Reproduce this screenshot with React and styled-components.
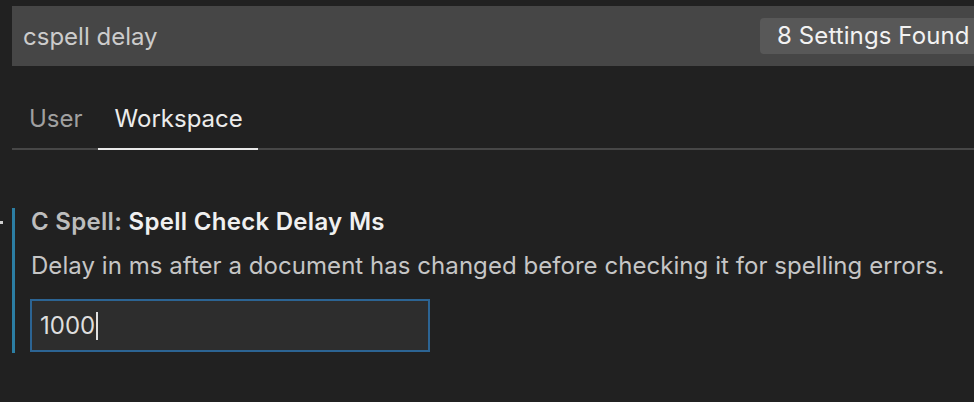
import React from 'react'
import styled, { createGlobalStyle } from 'styled-components'

const Global = createGlobalStyle`
  html, body {
    margin: 0;
    padding: 0;
    background: #212121;
    overflow: hidden;
  }
  body {
    font-family: Inter, "Noto Sans", "Liberation Sans", sans-serif;
  }
`

const Page = styled.div`
  width: 974px;
  height: 402px;
  background: #212121;
  padding: 6px 0 0 12px;
  box-sizing: border-box;
  position: relative;
  overflow: hidden;
`

const SearchBar = styled.div`
  width: 990px;
  height: 60px;
  box-sizing: border-box;
  background: #464646;
  display: flex;
  align-items: center;
  padding: 0 10px 0 11px;
  white-space: nowrap;
`

const Query = styled.span`
  font-size: 24px;
  color: #cccccc;
`

const Count = styled.span`
  margin-left: auto;
  background: #585858;
  color: #f2f2f2;
  font-size: 24px;
  border-radius: 4px;
  padding-left: 17px;
  box-sizing: border-box;
  height: 36px;
  line-height: 36px;
  width: 232px;
  letter-spacing: 0.1px;
`

const Tabs = styled.div`
  display: flex;
  margin-top: 39px;
  border-bottom: 2px solid #474747;
`

const Tab = styled.div`
  font-size: 24px;
  line-height: 28px;
  color: ${p => (p.$active ? '#ececec' : '#a0a0a0')};
  padding: 0 15px 15px 17px;
  margin-bottom: -2px;
  border-bottom: 2px solid ${p => (p.$active ? '#e8e8e8' : 'transparent')};
`

const Item = styled.div`
  margin-top: 58px;
  border-left: 3px solid #2c7ea3;
  padding-left: 16px;
  height: 145px;
  box-sizing: border-box;
`

const Dot = styled.div`
  position: absolute;
  left: 0;
  top: 221px;
  width: 3px;
  height: 3px;
  background: #cfcfcf;
`

const Title = styled.div`
  font-size: 24px;
  font-weight: 600;
  color: #f0f0f0;
  line-height: 28px;
  letter-spacing: 0.3px;
`

const Category = styled.span`
  color: #bdbdbd;
`

const Desc = styled.div`
  margin-top: 16px;
  font-size: 24px;
  color: #c6c6c6;
  line-height: 28px;
  letter-spacing: 0.05px;
`

const Input = styled.div`
  margin-top: 19px;
  margin-left: -1px;
  width: 400px;
  height: 53px;
  box-sizing: border-box;
  border: 2px solid #2c6493;
  background: #2d2d2d;
  display: flex;
  align-items: center;
  padding-left: 8px;
  font-size: 24px;
  color: #dedede;
`

const Caret = styled.span`
  display: inline-block;
  width: 2px;
  height: 28px;
  background: #e0e0e0;
  margin-left: 1px;
`

export default function App() {
  return (
    <>
      <Global />
      <Page>
        <Dot />
        <SearchBar>
          <Query>cspell delay</Query>
          <Count>8 Settings Found</Count>
        </SearchBar>
        <Tabs>
          <Tab>User</Tab>
          <Tab $active>Workspace</Tab>
        </Tabs>
        <Item>
          <Title>
            <Category>C Spell: </Category>Spell Check Delay Ms
          </Title>
          <Desc>Delay in ms after a document has changed before checking it for spelling errors.</Desc>
          <Input>
            1000<Caret />
          </Input>
        </Item>
      </Page>
    </>
  )
}
